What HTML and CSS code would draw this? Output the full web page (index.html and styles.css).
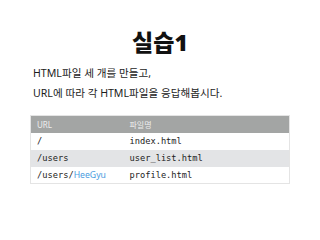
FILE: index.html
```html
<!DOCTYPE html>
<html lang="ko">
<head>
  <meta charset="UTF-8">
  <title>실습1</title>
  <link rel="stylesheet" href="styles.css">
</head>
<body>
  <div class="slide">
    <h1>실습1</h1>
    <p class="desc">HTML파일 세 개를 만들고,</p>
    <p class="desc">URL에 따라 각 HTML파일을 응답해봅시다.</p>

    <table class="routes">
      <thead>
        <tr>
          <th class="col-url">URL</th>
          <th>파일명</th>
        </tr>
      </thead>
      <tbody>
        <tr>
          <td>/</td>
          <td>index.html</td>
        </tr>
        <tr class="alt">
          <td>/users</td>
          <td>user_list.html</td>
        </tr>
        <tr>
          <td>/users/<span class="param">HeeGyu</span></td>
          <td>profile.html</td>
        </tr>
      </tbody>
    </table>
  </div>
</body>
</html>
```

FILE: styles.css
```css
* {
  margin: 0;
  padding: 0;
  box-sizing: border-box;
}

body {
  width: 320px;
  height: 240px;
  background: #fff;
  font-family: "Noto Sans", "Noto Sans CJK KR", sans-serif;
  color: #222;
  overflow: hidden;
}

.slide {
  padding: 28px 30px 0 30px;
}

h1 {
  text-align: center;
  font-size: 23px;
  font-weight: 900;
  color: #111;
  line-height: 28px;
  margin-bottom: 7px;
}

.desc {
  font-size: 10.6px;
  line-height: 20px;
  padding-left: 3px;
  color: #1c1c1c;
}

.routes {
  width: 260px;
  margin-top: 12px;
  border-collapse: collapse;
  border: 1px solid #e4e4e4;
  font-family: "DejaVu Sans Mono", monospace;
  font-size: 8.7px;
}

.routes th {
  background: #a3a5a4;
  color: #eee;
  text-align: left;
  font-family: "Noto Sans", "Noto Sans CJK KR", sans-serif;
  font-weight: 400;
  font-size: 8px;
  height: 17px;
  padding: 0 6px;
}

.routes .col-url {
  width: 93px;
}

.routes td {
  height: 17px;
  padding: 0 6px;
  color: #1c1c1c;
}

.routes .alt td {
  background: #e3e4e6;
}

.param {
  color: #4a9be0;
  font-family: "Noto Sans", sans-serif;
}
```
